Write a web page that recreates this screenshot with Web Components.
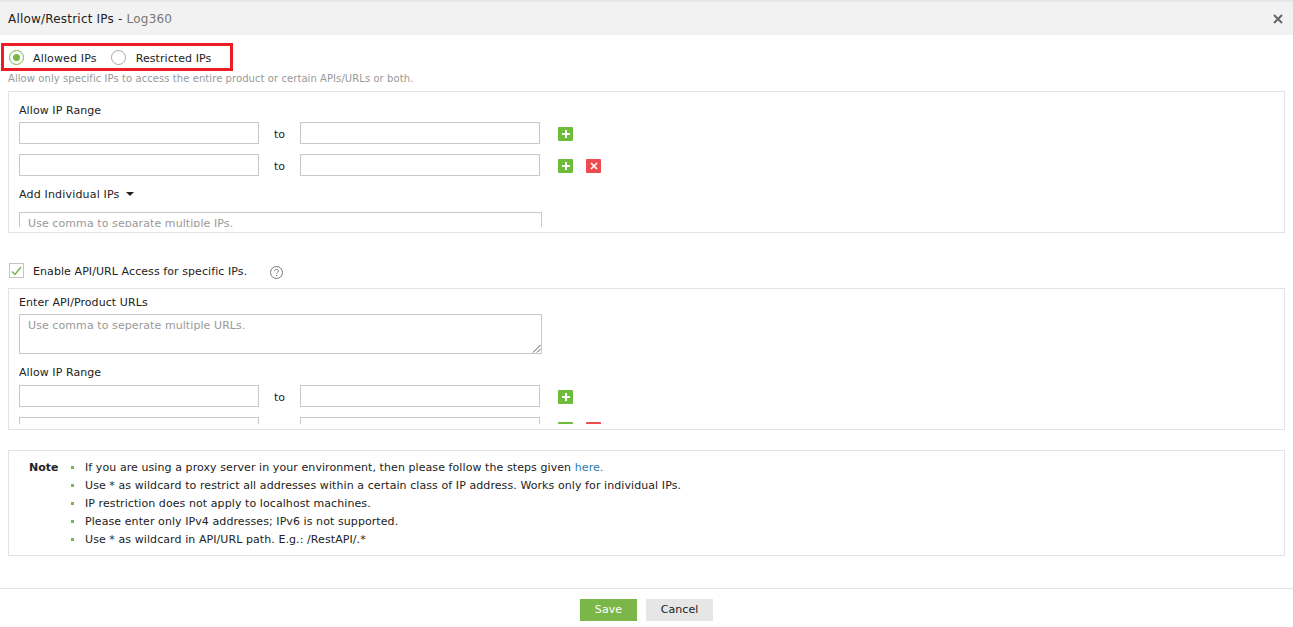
<!DOCTYPE html>
<html>
<head>
<meta charset="utf-8">
<title>Allow/Restrict IPs</title>
<style>
  html, body { margin: 0; height: 100%; background: #fff; }
  body { font: 11px "DejaVu Sans", Verdana, sans-serif; letter-spacing: .08px; color: #222; overflow: hidden; }
</style>
</head>
<body>
<ip-dialog>
  <ip-header slot="header" product="Log360">Allow/Restrict IPs</ip-header>

  <ip-mode-switch></ip-mode-switch>
  <ip-hint>Allow only specific IPs to access the entire product or certain APIs/URLs or both.</ip-hint>

  <ip-panel style="margin-top:6px">
    <ip-label>Allow IP Range</ip-label>
    <ip-range></ip-range>
    <ip-range removable></ip-range>
    <ip-dropdown>Add Individual IPs</ip-dropdown>
    <ip-textarea placeholder="Use comma to separate multiple IPs."></ip-textarea>
  </ip-panel>

  <ip-check-row>Enable API/URL Access for specific IPs.</ip-check-row>

  <ip-panel style="margin-top:10px;--pad-top:6px">
    <ip-label>Enter API/Product URLs</ip-label>
    <ip-textarea placeholder="Use comma to seperate multiple URLs."></ip-textarea>
    <ip-label style="margin-top:11px;margin-bottom:1px">Allow IP Range</ip-label>
    <ip-range></ip-range>
    <ip-range removable></ip-range>
  </ip-panel>

  <ip-note>
    <li>If you are using a proxy server in your environment, then please follow the steps given <a href="#" style="color:#2a7ab0;text-decoration:none">here.</a></li>
    <li>Use * as wildcard to restrict all addresses within a certain class of IP address. Works only for individual IPs.</li>
    <li>IP restriction does not apply to localhost machines.</li>
    <li>Please enter only IPv4 addresses; IPv6 is not supported.</li>
    <li>Use * as wildcard in API/URL path. E.g.: /RestAPI/.*</li>
  </ip-note>

  <ip-footer slot="footer"></ip-footer>
</ip-dialog>

<script>
class IpDialog extends HTMLElement {
  constructor() {
    super();
    this.attachShadow({ mode: "open" });
    this.shadowRoot.innerHTML = `
      <style>
        :host { display: flex; flex-direction: column; height: 627px; }
        #main { flex: 1; padding: 8px 8px 0; min-height: 0; }
      </style>
      <slot name="header"></slot>
      <div id="main"><slot></slot></div>
      <slot name="footer"></slot>
    `;
  }
}

class IpHeader extends HTMLElement {
  constructor() {
    super();
    this.attachShadow({ mode: "open" });
    this.shadowRoot.innerHTML = `
      <style>
        :host {
          display: flex;
          align-items: center;
          justify-content: space-between;
          height: 33px;
          margin-top: 2px;
          padding: 0 10px 0 8px;
          background: #f2f2f2;
          box-shadow: 0 -2px 0 #e6e6e6;
          font-size: 12px;
          letter-spacing: .2px;
          color: #222;
        }
        span { color: #777; }
        svg { display: block; }
      </style>
      <div><slot></slot> - <span id="product"></span></div>
      <svg width="10" height="10" viewBox="0 0 10 10">
        <path d="M1 1l8 8M9 1l-8 8" stroke="#666" stroke-width="2" fill="none"/>
      </svg>
    `;
    this.shadowRoot.querySelector("#product").textContent = this.getAttribute("product");
  }
}

class IpModeSwitch extends HTMLElement {
  constructor() {
    super();
    this.attachShadow({ mode: "open" });
    this.shadowRoot.innerHTML = `
      <style>
        :host {
          display: flex;
          align-items: center;
          box-sizing: border-box;
          width: 232px;
          height: 28px;
          margin-left: -7px;
          padding: 1px 0 0 5px;
          border: 3px solid #ed1c24;
          color: #222;
        }
        .radio {
          box-sizing: border-box;
          width: 15px;
          height: 15px;
          border-radius: 50%;
          border: 1.5px solid #a8a8a8;
          display: flex;
          align-items: center;
          justify-content: center;
        }
        .radio.on { border-color: #7ab648; }
        .radio.on::after {
          content: "";
          width: 7px;
          height: 7px;
          border-radius: 50%;
          background: #7ab648;
        }
        span { margin: 2px 0 0 10px; }
        span.first { margin: 2px 14px 0 9px; letter-spacing: .15px; }
      </style>
      <div class="radio on"></div><span class="first">Allowed IPs</span>
      <div class="radio"></div><span>Restricted IPs</span>
    `;
  }
}

class IpHint extends HTMLElement {
  constructor() {
    super();
    this.attachShadow({ mode: "open" });
    this.shadowRoot.innerHTML = `
      <style>
        :host { display: block; margin-top: 1px; height: 13px; line-height: 13px; font-size: 10px; letter-spacing: .07px; color: #999; white-space: nowrap; }
      </style>
      <slot></slot>
    `;
  }
}

class IpPanel extends HTMLElement {
  constructor() {
    super();
    this.attachShadow({ mode: "open" });
    this.shadowRoot.innerHTML = `
      <style>
        :host {
          display: block;
          border: 1px solid #e3e3e3;
          padding: var(--pad-top, 11px) 10px 5px;
        }
        /* content is scrolled in the original, so it is cut off at the bottom */
        #scroll { height: calc(135px - var(--pad-top, 11px)); overflow: hidden; }
      </style>
      <div id="scroll"><slot></slot></div>
    `;
  }
}

class IpLabel extends HTMLElement {
  constructor() {
    super();
    this.attachShadow({ mode: "open" });
    this.shadowRoot.innerHTML = `
      <style>
        :host { display: block; height: 19px; line-height: 16px; color: #222; }
      </style>
      <slot></slot>
    `;
  }
}

class IpRange extends HTMLElement {
  constructor() {
    super();
    this.attachShadow({ mode: "open" });
    const removeBtn = this.hasAttribute("removable") ? `
      <div class="btn red">
        <svg width="8" height="8" viewBox="0 0 8 8"><path d="M1 1l6 6M7 1L1 7" stroke="#fff" stroke-width="1.6"/></svg>
      </div>` : "";
    this.shadowRoot.innerHTML = `
      <style>
        :host { display: flex; align-items: center; height: 22px; margin-bottom: 10px; }
        .field { box-sizing: border-box; width: 240px; height: 22px; border: 1px solid #c8c8c8; background: #fff; }
        .to { width: 41px; margin-top: 2px; text-align: center; color: #222; }
        .btn {
          width: 15px;
          height: 14px;
          margin-top: 2px;
          border-radius: 1px;
          display: flex;
          align-items: center;
          justify-content: center;
        }
        .green { background: #6fbb3b; margin-left: 18px; }
        .red { background: #ee4b50; margin-left: 13px; }
      </style>
      <div class="field"></div>
      <div class="to">to</div>
      <div class="field"></div>
      <div class="btn green">
        <svg width="10" height="10" viewBox="0 0 10 10"><path d="M5 1v8M1 5h8" stroke="#fff" stroke-width="2"/></svg>
      </div>
      ${removeBtn}
    `;
  }
}

class IpDropdown extends HTMLElement {
  constructor() {
    super();
    this.attachShadow({ mode: "open" });
    this.shadowRoot.innerHTML = `
      <style>
        :host { display: flex; align-items: center; height: 16px; margin: 10px 0 10px; letter-spacing: .18px; color: #222; }
        i { margin-left: 6px; border: 4px solid transparent; border-top-color: #222; border-bottom: 0; }
      </style>
      <slot></slot><i></i>
    `;
  }
}

class IpTextarea extends HTMLElement {
  constructor() {
    super();
    this.attachShadow({ mode: "open" });
    this.shadowRoot.innerHTML = `
      <style>
        :host {
          display: block;
          position: relative;
          box-sizing: border-box;
          width: 523px;
          height: 40px;
          padding: 3px 8px;
          border: 1px solid #c8c8c8;
          color: #999;
          line-height: 15px;
        }
        svg { position: absolute; right: 0; bottom: 0; }
      </style>
      <span id="ph"></span>
      <svg width="9" height="9" viewBox="0 0 9 9"><path d="M8.5 1L1 8.5M8.5 5L5 8.5" stroke="#555" stroke-width="1" fill="none"/></svg>
    `;
    this.shadowRoot.querySelector("#ph").textContent = this.getAttribute("placeholder");
  }
}

class IpCheckRow extends HTMLElement {
  constructor() {
    super();
    this.attachShadow({ mode: "open" });
    this.shadowRoot.innerHTML = `
      <style>
        :host { display: flex; align-items: center; height: 15px; margin-top: 30px; margin-left: 1px; color: #222; }
        .box {
          box-sizing: border-box;
          width: 15px;
          height: 15px;
          border: 1px solid #c4c4c4;
          display: flex;
          align-items: center;
          justify-content: center;
        }
        span { margin: 2px 0 0 9px; }
        .help { margin: 3px 0 0 23px; display: block; }
      </style>
      <div class="box">
        <svg width="11" height="10" viewBox="0 0 11 10"><path d="M1 5.5l3 3 6-7.5" stroke="#7ab648" stroke-width="1.5" fill="none"/></svg>
      </div>
      <span><slot></slot></span>
      <svg class="help" width="13" height="13" viewBox="0 0 13 13">
        <circle cx="6.5" cy="6.5" r="6" fill="none" stroke="#777"/>
        <path d="M4.6 5.2c0-1.2.9-1.9 1.9-1.9s1.9.7 1.9 1.7c0 1.3-1.8 1.4-1.8 2.8" fill="none" stroke="#777"/>
        <rect x="6" y="9" width="1.2" height="1.2" fill="#777"/>
      </svg>
    `;
  }
}

class IpNote extends HTMLElement {
  constructor() {
    super();
    this.attachShadow({ mode: "open" });
    this.shadowRoot.innerHTML = `
      <style>
        :host {
          display: flex;
          box-sizing: border-box;
          height: 106px;
          margin-top: 20px;
          padding: 8px 0 0 20px;
          border: 1px solid #e3e3e3;
          color: #222;
        }
        b { width: 30px; line-height: 18px; letter-spacing: 0; }
        ul { margin: 0; padding: 0 0 0 26px; list-style: none; }
        ::slotted(li) { line-height: 18px; position: relative; }
        ::slotted(li)::before {
          content: "";
          position: absolute;
          left: -14px;
          top: 7px;
          width: 3px;
          height: 3px;
          background: #7ab648;
        }
      </style>
      <b>Note</b>
      <ul><slot></slot></ul>
    `;
  }
}

class IpFooter extends HTMLElement {
  constructor() {
    super();
    this.attachShadow({ mode: "open" });
    this.shadowRoot.innerHTML = `
      <style>
        :host {
          display: flex;
          justify-content: center;
          gap: 9px;
          box-sizing: border-box;
          height: 39px;
          padding-top: 10px;
          border-top: 1px solid #e3e3e3;
        }
        div { height: 22px; line-height: 22px; text-align: center; }
        .save { width: 57px; background: #7ab648; color: #fff; }
        .cancel { width: 67px; background: #e6e6e6; color: #222; }
      </style>
      <div class="save">Save</div>
      <div class="cancel">Cancel</div>
    `;
  }
}

customElements.define("ip-dialog", IpDialog);
customElements.define("ip-header", IpHeader);
customElements.define("ip-mode-switch", IpModeSwitch);
customElements.define("ip-hint", IpHint);
customElements.define("ip-panel", IpPanel);
customElements.define("ip-label", IpLabel);
customElements.define("ip-range", IpRange);
customElements.define("ip-dropdown", IpDropdown);
customElements.define("ip-textarea", IpTextarea);
customElements.define("ip-check-row", IpCheckRow);
customElements.define("ip-note", IpNote);
customElements.define("ip-footer", IpFooter);
</script>
</body>
</html>
